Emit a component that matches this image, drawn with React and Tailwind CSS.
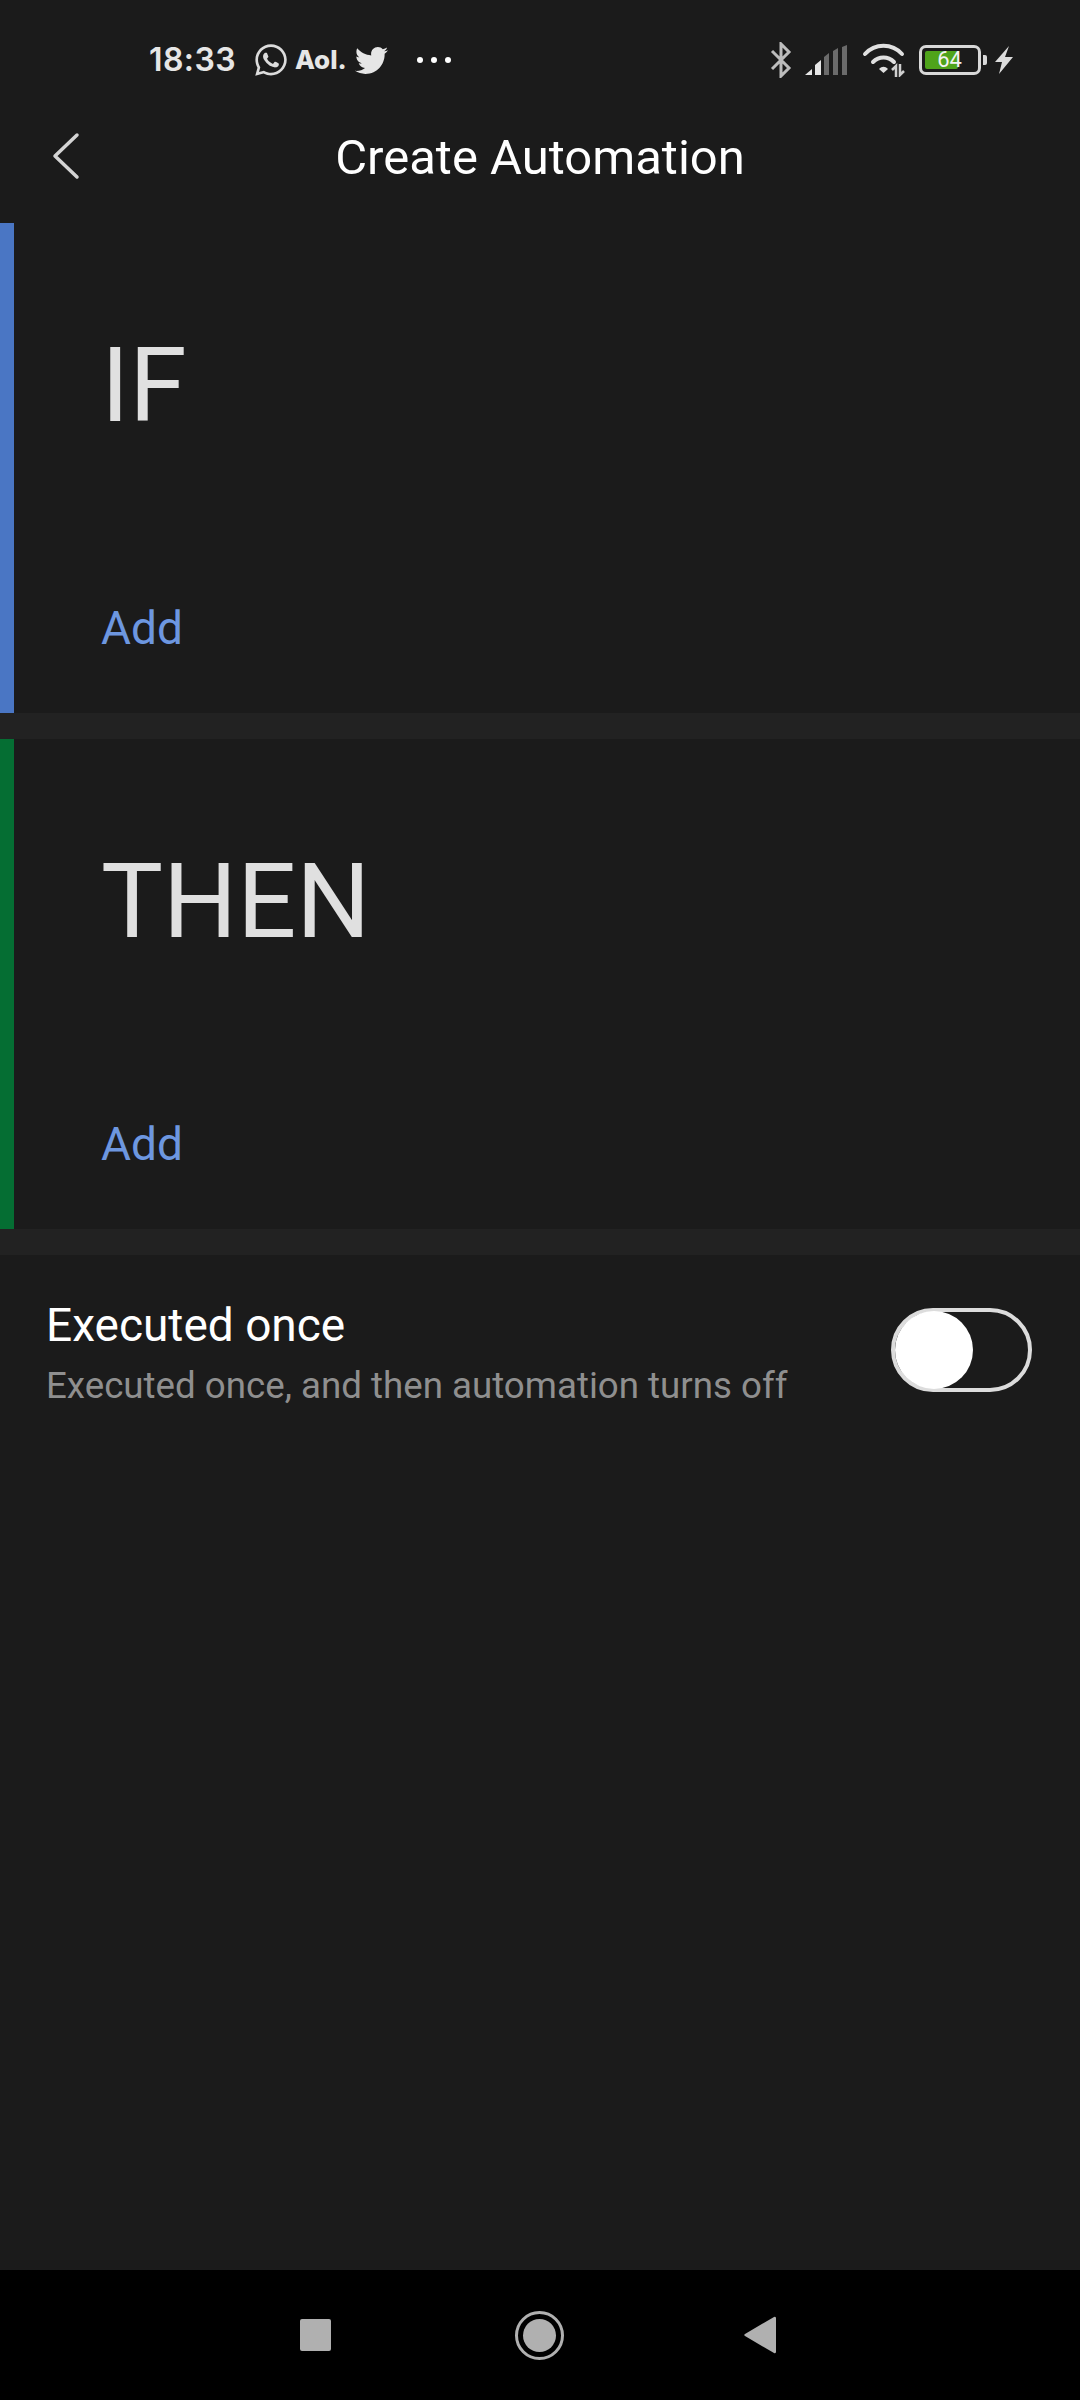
import { FaTwitter, FaWhatsapp } from 'react-icons/fa'

function BluetoothIcon() {
  return (
    <svg width="22" height="36" viewBox="0 0 22 36" fill="none" stroke="#bdbdbd" strokeWidth="3">
      <path d="M2 9l17 17-8 8V2l8 8L2 27" />
    </svg>
  )
}

function SignalIcon() {
  return (
    <svg width="42" height="30" viewBox="0 0 42 30">
      <path d="M0 30l7-6v6z" fill="#e6e6e6" />
      <path d="M10 30V20l6-5v15z" fill="#e6e6e6" />
      <path d="M19 30V12l5-4v22zM28 30V6l5-3v27zM37 30V2l5-2v30z" fill="#6b6b6b" />
    </svg>
  )
}

function WifiIcon() {
  return (
    <svg width="46" height="34" viewBox="0 0 46 34" fill="none">
      <path d="M3 11C13 0 30 0 40 11" stroke="#e0e0e0" strokeWidth="4" strokeLinecap="round" />
      <path d="M11 19c6-6 15-6 21 0" stroke="#e0e0e0" strokeWidth="4" strokeLinecap="round" />
      <path d="M17 26c3-3 6-3 9 0l-4.500 4z" fill="#e0e0e0" />
      <path d="M34 34V23l-4 4M38 21v11l4-4" stroke="#d0d0d0" strokeWidth="2.500" />
    </svg>
  )
}

function BatteryIcon() {
  return (
    <div className="flex items-center gap-[2px]">
      <div className="relative h-[30px] w-[62px] rounded-[7px] border-[3px] border-[#d8d8d8] p-[3px]">
        <div className="h-full w-[33px] rounded-[2px] bg-[#4fa31b]" />
        <span className="absolute inset-0 flex items-center justify-center pr-[1px] font-['Roboto',sans-serif] text-[22px] leading-none text-[#f2f2f2]">64</span>
      </div>
      <div className="h-[10px] w-[4px] rounded-r-[2px] bg-[#d8d8d8]" />
    </div>
  )
}

function StatusBar() {
  return (
    <div className="flex h-[120px] items-center pl-[149px] pr-[66px] font-['Inter',sans-serif] text-[#e6e6e6]">
      <span className="text-[32px] font-semibold leading-none tracking-[0.4px]">18:33</span>
      <FaWhatsapp className="ml-[17px] text-[36px] text-[#dcdcdc]" />
      <span className="ml-[6px] text-[26px] font-extrabold leading-none">Aol.</span>
      <FaTwitter className="ml-[8px] text-[33px]" />
      <div className="ml-[29px] flex gap-[8px]">
        <span className="h-[6px] w-[6px] rounded-full bg-white" />
        <span className="h-[6px] w-[6px] rounded-full bg-white" />
        <span className="h-[6px] w-[6px] rounded-full bg-white" />
      </div>
      <div className="ml-auto flex items-center">
        <BluetoothIcon />
        <div className="ml-[13px]"><SignalIcon /></div>
        <div className="ml-[15px]"><WifiIcon /></div>
        <div className="ml-[11px]"><BatteryIcon /></div>
        <svg className="ml-[7px]" width="20" height="30" viewBox="0 0 20 30">
          <path d="M15 1L1 17h7l-3 12 14-17h-8z" fill="#dcdcdc" />
        </svg>
      </div>
    </div>
  )
}

function Header() {
  return (
    <div className="relative flex h-[74px] items-center justify-center">
      <svg className="absolute left-[52px] top-[12px]" width="28" height="48" viewBox="0 0 28 48" fill="none">
        <path d="M25 3L3 24l22 21" stroke="#d4d4d4" strokeWidth="3.500" strokeLinecap="round" strokeLinejoin="round" />
      </svg>
      <h1 className="text-[49px] font-normal leading-none text-white">Create Automation</h1>
    </div>
  )
}

function Block({ title, barColor }) {
  return (
    <section className="flex h-[490px]">
      <div className={`w-[14px] ${barColor}`} />
      <div className="flex flex-1 flex-col pl-[87px]">
        <h2 className="mt-[111px] text-[104px] font-normal leading-none text-[#e0e0e0]">{title}</h2>
        <button className="mt-auto mb-[62px] self-start text-[46px] leading-none text-[#6d97e0]">Add</button>
      </div>
    </section>
  )
}

export default function App() {
  return (
    <div className="flex h-[2400px] w-[1080px] flex-col overflow-hidden bg-[#1b1b1b] font-['Roboto',sans-serif]">
      <StatusBar />
      <Header />
      <div className="h-[29px]" />
      <Block title="IF" barColor="bg-[#4a76c4]" />
      <div className="h-[26px] bg-[#222222]" />
      <Block title="THEN" barColor="bg-[#056e33]" />
      <div className="h-[26px] bg-[#222222]" />

      <div className="flex items-center pl-[46px] pr-[48px] pt-[42px]">
        <div className="flex-1">
          <div className="text-[46px] leading-[56px] text-white">Executed once</div>
          <div className="mt-[11px] text-[36.700px] leading-[44px] text-[#8f8f8f]">Executed once, and then automation turns off</div>
        </div>
        <div className="-mt-[6px] flex h-[84px] w-[141px] items-center rounded-full border-[4px] border-[#dcdcdc]">
          <div className="h-[78px] w-[78px] shrink-0 rounded-full bg-white" />
        </div>
      </div>

      <nav className="mt-auto flex h-[130px] items-center bg-black pl-[300px]">
        <div className="h-[32px] w-[31px] rounded-[2px] bg-[#b0b0b0]" />
        <div className="ml-[184px] flex h-[49px] w-[49px] items-center justify-center rounded-full border-[3px] border-[#b0b0b0]">
          <div className="h-[33px] w-[33px] rounded-full bg-[#b0b0b0]" />
        </div>
        <svg className="ml-[180px]" width="32" height="38" viewBox="0 0 32 38">
          <path d="M30 1a1.500 1.500 0 0 1 2 1v34a1.500 1.500 0 0 1-2 1L1 20a1.200 1.200 0 0 1 0-2z" fill="#b0b0b0" />
        </svg>
      </nav>
    </div>
  )
}
